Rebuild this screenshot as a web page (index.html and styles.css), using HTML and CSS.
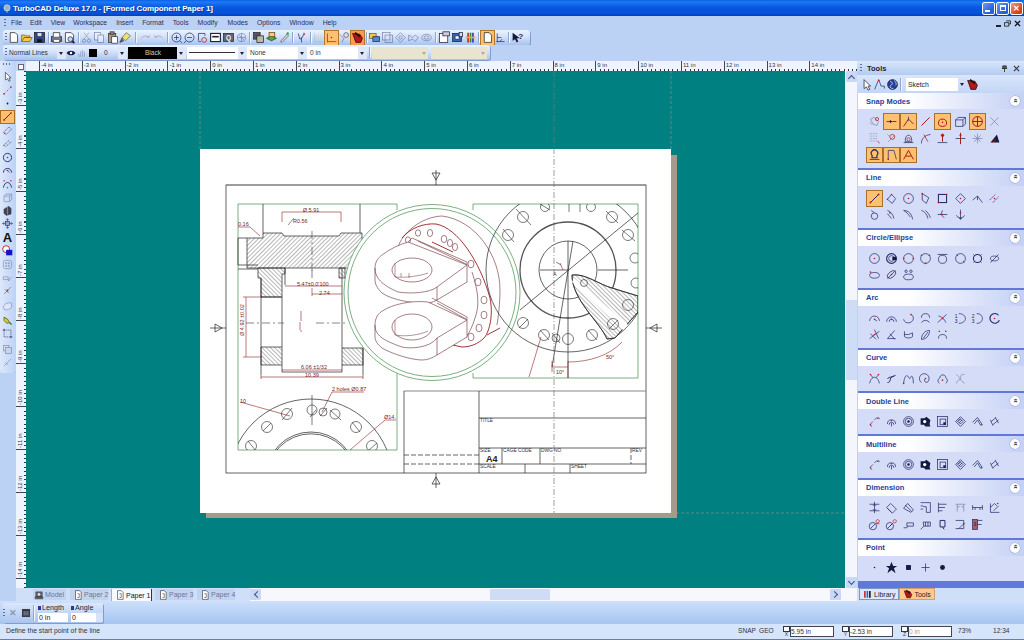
FILE: index.html
```html
<!DOCTYPE html>
<html lang="en">
<head>
<meta charset="utf-8">
<title>TurboCAD Deluxe 17.0</title>
<link rel="stylesheet" href="styles.css">
</head>
<body>
<svg class="defs" width="0" height="0" aria-hidden="true">
  <defs>
    <pattern id="hatchA" width="3" height="3" patternUnits="userSpaceOnUse" patternTransform="rotate(-45)"><line x1="0" y1="0" x2="3" y2="0" stroke="#333" stroke-width=".7"/></pattern>
    <pattern id="hatchB" width="3" height="3" patternUnits="userSpaceOnUse" patternTransform="rotate(45)"><line x1="0" y1="0" x2="3" y2="0" stroke="#333" stroke-width=".7"/></pattern>
    <clipPath id="clipDetail"><circle cx="432" cy="292.5" r="84"/></clipPath>
    <clipPath id="clipRight"><rect x="473" y="204" width="165" height="174"/></clipPath>
    <clipPath id="clipBottom"><rect x="238" y="390" width="159" height="60"/></clipPath>
    <symbol id="d1" viewBox="0 0 16 16"><path d="M3 11l3-3M8 6l3-3M3 13l2 1M13 3l1 2"/><circle class="d" cx="3" cy="12" r="1"/><circle class="d" cx="12" cy="4" r="1"/></symbol>
    <symbol id="d2" viewBox="0 0 16 16"><path d="M3 11a5 5 0 0 1 10 0M5 12a3 3 0 0 1 6 0M8 10v4"/><circle class="d" cx="8" cy="7" r="1"/></symbol>
    <symbol id="d3" viewBox="0 0 16 16"><circle cx="8" cy="8" r="6"/><circle cx="8" cy="8" r="4"/><circle class="f" cx="8" cy="8" r="1.5"/></symbol>
    <symbol id="d4" viewBox="0 0 16 16"><path class="f" d="M2 4h5l2-2 5 4-1 5 1 3-6 0-2-2H2z"/><circle class="w" cx="7" cy="8" r="2"/></symbol>
    <symbol id="d5" viewBox="0 0 16 16"><rect x="2" y="2" width="12" height="12"/><rect x="5" y="5" width="7" height="7"/><rect class="f" x="9" y="9" width="3" height="3"/></symbol>
    <symbol id="d6" viewBox="0 0 16 16"><path d="M8 2l6 6-6 6-6-6zM8 5l3 3-3 3-3-3z"/><path d="M4 8l4-4M6 10l4-4"/></symbol>
    <symbol id="d7" viewBox="0 0 16 16"><path d="M2 9l6-6 6 9M4 11l4-5 4 7"/><circle class="d" cx="13" cy="12" r="1"/></symbol>
    <symbol id="d8" viewBox="0 0 16 16"><path d="M4 8l6-5M6 12l7-6M3 6l3 7M9 3l4 7"/></symbol>
  </defs>
</svg>

<header class="title">
  <svg class="ic app" viewBox="0 0 16 16"><circle cx="8" cy="7" r="5" fill="#9fb0c8" stroke="#e8eef8"/><path d="M8 12v3" stroke="#e8eef8"/></svg>
  <span class="title-text">TurboCAD Deluxe 17.0 - [Formed Component Paper 1]</span>
  <div class="winbtns">
    <span class="winbtn blue"><i class="min"></i></span>
    <span class="winbtn blue"><i class="max"></i></span>
    <span class="winbtn red">✕</span>
  </div>
</header>

<nav class="menubar">
  <span class="grip"></span>
  <span class="m m1">File</span><span class="m m2">Edit</span><span class="m m3">View</span><span class="m m4">Workspace</span><span class="m m5">Insert</span><span class="m m6">Format</span><span class="m m7">Tools</span><span class="m m8">Modify</span><span class="m m9">Modes</span><span class="m m10">Options</span><span class="m m11">Window</span><span class="m m12">Help</span>
  <div class="mdi">
    <span class="mdi-min"></span>
    <svg class="mdi-ic" viewBox="0 0 8 8"><path d="M2.5 1h5v3.5h-2M.5 3h5v4h-5z" fill="none" stroke="#222"/></svg>
    <svg class="mdi-ic" viewBox="0 0 8 8"><path d="M1 1l6 6M7 1L1 7" stroke="#111" stroke-width="1.5"/></svg>
  </div>
</nav>

<div class="tbrow">
  <div class="tb tb1">
    <span class="grip"></span>
    <svg class="ic" viewBox="0 0 16 16"><path d="M4 2h6l3 3v9H4z" fill="#fff" stroke="#222"/></svg>
    <svg class="ic" viewBox="0 0 16 16"><path d="M2 13V5h4l1 1h5v2H5l-3 5h10l3-5H5" fill="#f5c84c" stroke="#7a5a10"/></svg>
    <svg class="ic" viewBox="0 0 16 16"><rect x="2" y="2" width="12" height="12" fill="#3c4a80" stroke="#111"/><rect x="5" y="2" width="6" height="5" fill="#dde"/><rect x="5" y="10" width="6" height="4" fill="#111"/></svg>
    <span class="sep"></span>
    <svg class="ic" viewBox="0 0 16 16"><rect x="2" y="7" width="12" height="6" fill="#778" stroke="#222"/><path d="M4 7V2h8v5M4 11v3h8v-3" fill="#fff" stroke="#222"/></svg>
    <svg class="ic" viewBox="0 0 16 16"><path d="M3 2h7l3 3v9H3z" fill="#fff" stroke="#223"/><circle cx="9" cy="10" r="3" fill="#bde" stroke="#225"/><path d="M11 12l3 3" stroke="#225" stroke-width="2"/></svg>
    <span class="sep"></span>
    <svg class="ic dim" viewBox="0 0 16 16"><path d="M5 2l6 8M11 2L5 10" stroke="#667"/><circle cx="5" cy="12" r="2"/><circle cx="11" cy="12" r="2"/></svg>
    <svg class="ic dim" viewBox="0 0 16 16"><rect x="2" y="2" width="7" height="9" fill="#fff"/><rect x="6" y="5" width="7" height="9" fill="#fff"/></svg>
    <svg class="ic" viewBox="0 0 16 16"><rect x="3" y="3" width="9" height="11" fill="#a98" stroke="#333"/><rect x="7" y="7" width="7" height="8" fill="#fff" stroke="#334"/><rect x="5" y="1" width="5" height="3" fill="#888" stroke="#333"/></svg>
    <svg class="ic" viewBox="0 0 16 16"><path d="M9 2l5 4-6 6-4-4z" fill="#f2e070" stroke="#665"/><path d="M4 8l-3 6 5-2" fill="#668" stroke="#334"/></svg>
    <span class="sep sepw"></span>
    <svg class="ic dim" viewBox="0 0 16 16"><path d="M3 9a5 4 0 0 1 9-1l1-3M12 8l-3-1" stroke="#667"/></svg>
    <svg class="ic dim" viewBox="0 0 16 16"><path d="M13 9a5 4 0 0 0-9-1L3 5M4 8l3-1" stroke="#667"/></svg>
    <span class="sep"></span>
    <svg class="ic" viewBox="0 0 16 16"><circle cx="8" cy="8" r="5.5"/><path d="M5 8h6M8 5v6M12 12l3 3"/></svg>
    <svg class="ic" viewBox="0 0 16 16"><circle cx="8" cy="8" r="5.5"/><path d="M5 8h6M4 12l-3 3"/></svg>
    <svg class="ic" viewBox="0 0 16 16"><path d="M3 3h8v3M3 3v9M3 13h3"/><circle class="r" cx="10" cy="11" r="3"/></svg>
    <svg class="ic" viewBox="0 0 16 16"><rect x="2" y="3" width="12" height="10" fill="#fff" stroke="#223" stroke-width="1.4"/><path d="M4 7h8" stroke="#223" stroke-width="2"/></svg>
    <svg class="ic" viewBox="0 0 16 16"><rect x="2" y="3" width="12" height="10" fill="#667" stroke="#223"/><text class="tbq" x="8" y="11">Q</text></svg>
    <svg class="ic dim" viewBox="0 0 16 16"><circle cx="8" cy="8" r="5"/><path d="M3 8h10M8 3v10M5 5l6 6"/></svg>
    <span class="sep"></span>
    <svg class="ic" viewBox="0 0 16 16"><rect x="2" y="2" width="8" height="8" fill="#556" stroke="#222"/><rect x="6" y="6" width="8" height="8" fill="#bba" stroke="#222"/></svg>
    <svg class="ic" viewBox="0 0 16 16"><path d="M2 9l6-3 6 3-6 3z" fill="#5a4" stroke="#232"/><rect x="5" y="2" width="7" height="5" fill="#fc6" stroke="#642"/></svg>
    <svg class="ic" viewBox="0 0 16 16"><path d="M3 13L11 4l2 2-8 8z" fill="#d9dcec" stroke="#556"/><circle cx="12" cy="3" r="1.5" fill="#2a4" stroke="none"/></svg>
    <span class="sep"></span>
    <svg class="ic" viewBox="0 0 16 16"><path d="M4 3l2 7 3-2 2-5M8 8v6"/><path d="M11 2l1 3" stroke="#b11"/></svg>
    <span class="sep"></span>
    <svg class="ic dim" viewBox="0 0 16 16"><path d="M3 3v10h10" stroke="#9aa"/><path d="M5 5v6M8 5v6M11 5v6" stroke="#c84" stroke-dasharray="1 1"/></svg>
    <span class="hot"><svg class="ic" viewBox="0 0 16 16"><path class="r" d="M3 14V3M3 13h11"/><circle class="d" cx="8" cy="8" r="1"/></svg></span>
    <svg class="ic" viewBox="0 0 16 16"><path d="M2 4l5 5-2 5" stroke="#778"/><circle cx="10" cy="5" r="3" fill="#ddd" stroke="#556"/></svg>
    <span class="hot hotr"><svg class="ic" viewBox="0 0 16 16"><path d="M2 3l9 1 3 5-2 5H6z" fill="#b21a1a" stroke="#300"/><path d="M5 2l6 5" stroke="#111" stroke-width="2"/></svg></span>
    <span class="sep"></span>
    <svg class="ic" viewBox="0 0 16 16"><rect x="2" y="3" width="8" height="6" fill="#f5c84c" stroke="#654"/><rect x="6" y="7" width="8" height="6" fill="#58c" stroke="#223"/></svg>
    <svg class="ic dim" viewBox="0 0 16 16"><rect x="2" y="2" width="9" height="9" fill="#e8ecf8"/><rect x="5" y="5" width="9" height="9"/></svg>
    <svg class="ic dim" viewBox="0 0 16 16"><path d="M8 2l6 6-6 6-6-6z"/><circle cx="8" cy="8" r="2"/></svg>
    <svg class="ic dim" viewBox="0 0 16 16"><path d="M2 5l5 3 3-3 4 3-4 5-3-3-5 2z"/></svg>
    <svg class="ic dim" viewBox="0 0 16 16"><ellipse cx="8" cy="8" rx="6" ry="4"/><ellipse cx="8" cy="8" rx="3" ry="2"/></svg>
    <span class="sep"></span>
    <svg class="ic" viewBox="0 0 16 16"><rect x="2" y="3" width="10" height="11" fill="#fff" stroke="#223"/><rect x="6" y="1" width="8" height="5" fill="#ccd" stroke="#223"/></svg>
    <svg class="ic" viewBox="0 0 16 16"><rect x="2" y="3" width="11" height="10" fill="#36b" stroke="#123"/><rect x="5" y="6" width="5" height="4" fill="#fff"/><rect x="10" y="2" width="4" height="5" fill="#dde" stroke="#123"/></svg>
    <svg class="ic" viewBox="0 0 16 16"><path d="M5 2v12" stroke="#c22" stroke-width="2"/><path d="M8 2v12" stroke="#383" stroke-width="2"/><path d="M11 2v12" stroke="#33b" stroke-width="2"/><path d="M2 8h12" stroke="#fa0" stroke-width="2"/></svg>
    <span class="sep"></span>
    <span class="hot"><svg class="ic" viewBox="0 0 16 16"><path d="M4 2h6l3 3v9H4z" fill="#fff" stroke="#222"/></svg></span>
    <svg class="ic" viewBox="0 0 16 16"><path d="M4 3v10h9M4 8h5M7 13l3-3" stroke="#334"/><circle class="d" cx="4" cy="13" r="1"/></svg>
    <span class="sep"></span>
    <svg class="ic" viewBox="0 0 16 16"><path d="M2 2v10l3-2 2 4 2-1-2-4h4z" class="f"/><text class="tbhelp" x="9" y="10">?</text></svg>
  </div>
</div>

<div class="tbrow tbrow2">
  <div class="tb tb2">
    <span class="grip"></span>
    <span class="fld f-lines">Normal Lines</span><span class="arr"></span>
    <svg class="ic small" viewBox="0 0 16 16"><path class="f" d="M1 8c3-5 11-5 14 0-3 5-11 5-14 0z"/><circle class="w" cx="8" cy="8" r="2"/></svg>
    <svg class="ic small dim" viewBox="0 0 16 16"><path d="M6 14V5M9 14V3M12 14V6M4 14l-2-5"/></svg>
    <span class="swatch"></span>
    <span class="fld f-layer">0</span><span class="arr"></span>
    <span class="fld f-black">Black</span><span class="arr"></span>
    <span class="fld f-line"><i></i></span><span class="arr"></span>
    <span class="fld f-none">None</span><span class="arr"></span>
    <span class="fld f-in">0 in</span><span class="arr"></span>
    <span class="sep sep2"></span>
    <span class="fld f-off"><b></b></span>
    <span class="fld f-off"><b></b></span>
  </div>
</div>

<main class="work">
  <aside class="lefttools">
    <span class="grip-h"></span>
    <span class="lt"><svg class="ic" viewBox="0 0 16 16"><path d="M5 2v11l3-2 2 4 2-1-2-4h3z" fill="#fff" stroke="#223"/></svg></span>
    <span class="lt"><svg class="ic" viewBox="0 0 16 16"><path d="M3 13l2-2M7 9l2-2M11 5l2-2" stroke="#339"/><circle class="d" cx="3" cy="13" r="1.2"/><circle class="d" cx="13" cy="3" r="1.2"/></svg></span>
    <span class="lt"><svg class="ic" viewBox="0 0 16 16"><circle class="f" cx="8" cy="8" r="1.3"/></svg></span>
    <span class="lt act"><svg class="ic" viewBox="0 0 16 16"><path d="M3 13L13 3" stroke="#223" stroke-width="1.3"/><circle class="d" cx="3" cy="13" r="1.3"/><circle class="d" cx="13" cy="3" r="1.3"/></svg></span>
    <span class="lt"><svg class="ic" viewBox="0 0 16 16"><path d="M2 11l8-8 4 3-8 8z" stroke-dasharray="2 1"/><circle class="d" cx="4" cy="12" r="1"/></svg></span>
    <span class="lt"><svg class="ic" viewBox="0 0 16 16"><path d="M2 11L11 3M5 13l9-8" stroke-dasharray="2 1"/><circle class="d" cx="3" cy="11" r="1"/></svg></span>
    <span class="lt"><svg class="ic" viewBox="0 0 16 16"><circle cx="8" cy="8" r="6" stroke-width="1.3"/><circle class="d" cx="8" cy="8" r="1.2"/></svg></span>
    <span class="lt"><svg class="ic" viewBox="0 0 16 16"><path d="M2 11a6 6 0 1 1 12 0" stroke-width="1.3"/><path d="M8 8l3 3"/><circle class="d" cx="8" cy="8" r="1.2"/></svg></span>
    <span class="lt"><svg class="ic" viewBox="0 0 16 16"><path d="M2 14C4 4 12 4 14 14" stroke-width="1.3"/><circle class="d" cx="3" cy="4" r="1"/><circle class="d" cx="13" cy="4" r="1"/><circle class="d" cx="8" cy="14" r="1"/></svg></span>
    <span class="lt"><svg class="ic dim" viewBox="0 0 16 16"><path d="M3 6l3-3h8v8l-3 3H3zM3 6h8v8M11 6l3-3"/></svg></span>
    <span class="lt"><svg class="ic" viewBox="0 0 16 16"><path d="M3 6l7-4 3 3v8l-7 2-3-3z" fill="#445" stroke="#223"/><path d="M8 2v12" stroke="#aab"/></svg></span>
    <span class="lt"><svg class="ic" viewBox="0 0 16 16"><path d="M8 1v14M1 8h14M8 1l-2 2M8 1l2 2M8 15l-2-2M8 15l2-2M1 8l2-2M1 8l2 2M15 8l-2-2M15 8l-2 2"/><rect x="5" y="5" width="6" height="6" fill="#9ab"/></svg></span>
    <span class="lt"><span class="bigA">A</span></span>
    <span class="lt"><svg class="ic" viewBox="0 0 16 16"><circle cx="6" cy="6" r="5" fill="#fff" stroke="#c22" stroke-width="1.4"/><rect x="6" y="7" width="9" height="8" fill="#1212d0" stroke="none"/></svg></span>
    <span class="lt"><svg class="ic dim" viewBox="0 0 16 16"><rect x="2" y="2" width="12" height="12" rx="3"/><circle cx="6" cy="6" r="1"/><circle cx="10" cy="6" r="1"/><circle cx="6" cy="10" r="1"/><circle cx="10" cy="10" r="1"/></svg></span>
    <span class="lt"><svg class="ic dim" viewBox="0 0 16 16"><path d="M2 7h7v4H2zM9 13l5-6"/><circle class="d" cx="10" cy="12" r="1"/></svg></span>
    <span class="lt ltsep"><svg class="ic" viewBox="0 0 16 16"><path d="M3 13L13 3M4 6l6 6" stroke="#667"/><circle class="d" cx="8" cy="8" r="1.3"/></svg></span>
    <span class="lt"><svg class="ic dim" viewBox="0 0 16 16"><path d="M2 8c2-5 8-6 12-5v6c-2 3-7 5-11 3z" fill="#eef"/></svg></span>
    <span class="lt"><svg class="ic" viewBox="0 0 16 16"><path d="M3 3l5 3 3 5-4 1-4-4z" fill="#dc2" stroke="#331"/><path d="M11 11l3 3" stroke="#282" stroke-width="2"/></svg></span>
    <span class="lt ltsep"><svg class="ic" viewBox="0 0 16 16"><rect x="3" y="3" width="10" height="10" stroke-dasharray="2 1"/><path d="M1 3h3M3 1v3M12 13h3M13 12v3"/></svg></span>
    <span class="lt"><svg class="ic dim" viewBox="0 0 16 16"><rect x="2" y="2" width="8" height="8" fill="#dde"/><rect x="5" y="5" width="9" height="9" fill="#ccd"/></svg></span>
    <span class="lt"><svg class="ic dim" viewBox="0 0 16 16"><path d="M3 13L13 3M5 8l4 4"/></svg></span>
  </aside>

  <section class="center">
    <div class="hruler">
      <span class="corner"><i></i></span>
      <div class="hticks">
        <span>-4 in</span><span>-3 in</span><span>-2 in</span><span>-1 in</span><span>0 in</span><span>1 in</span><span>2 in</span><span>3 in</span><span>4 in</span><span>5 in</span><span>6 in</span><span>7 in</span><span>8 in</span><span>9 in</span><span>10 in</span><span>11 in</span><span>12 in</span><span>13 in</span><span>14 in</span>
      </div>
    </div>
    <div class="mid">
      <div class="vruler">
        <span class="first">-3 in</span><span>-4 in</span><span>-5 in</span><span>-6 in</span><span>-7 in</span><span>-8 in</span><span>-9 in</span><span>-10 in</span><span>-11 in</span><span>-12 in</span><span>-13 in</span><span>-14 in</span>
      </div>
      <div class="canvas">
        <svg class="sheet" viewBox="26 71 819 517" width="819" height="517">
          <g class="guides">
            <path d="M200 71V149M671 71V149M671 513H845"/>
          </g>
          <rect x="206" y="155" width="471" height="363" fill="#a59b8b"/>
          <rect x="200" y="149" width="471" height="364" fill="#fff"/>
          <g class="ink">
            <rect x="226" y="185" width="420" height="288"/>
            <path class="thick" d="M226 185H646"/>
            <path d="M436 170v15M432 173h8l-4 7zM436 473v15M432 484h8l-4-7zM210 328h16M215 324v8l7-4zM646 328h16M657 324v8l-7-4z"/>
            <path class="thick" d="M404 391H646"/>
            <path d="M404 391V473M479 391V473M479 418H646M479 448H646M479 464H646M502 448V464M540 448V464M525 464V473M570 464V473"/>
            <path class="dash" d="M404 455H479M404 464H479M631 448V464"/>
          </g>
          <g class="tb-labels">
            <text x="480" y="422">TITLE</text><text x="480" y="452">SIZE</text><text x="503" y="452">CAGE CODE</text><text x="541" y="452">DWG NO</text><text x="632" y="452">REV</text><text x="480" y="468">SCALE</text><text x="571" y="468">SHEET</text>
            <text class="a4" x="486" y="462">A4</text>
          </g>

          <path class="green" d="M397 210V204H238V450H397V373"/>
          <g class="ink">
            <path fill="url(#hatchA)" d="M247 238H263V233H282L284 236H339L341 233H362V268H247Z"/>
            <path fill="url(#hatchB)" d="M258 268H285V274H282V297H261V278H258Z"/>
            <path fill="url(#hatchB)" d="M261 347H282V365H261Z"/>
            <path fill="url(#hatchB)" d="M342 348H363V365H342Z"/>
            <path fill="url(#hatchB)" d="M339 268H345V278H339Z"/>
            <path d="M263 204V233M360 204V233M238 238H247M238 265H258M238 269H258M261 278V375M282 297V347M261 297H282M285 268V285M342 268V348M363 348V375M282 365V372H342V365M238 238V265"/>
            <path class="thin" d="M246 323H284M316 323H345M312 231V272M312 270V281"/>
          </g>
          <g class="dimr">
            <path d="M282 212H341M282 212V222M341 212V222M288 225L294 218M285 286H342M312 294H342M312 288V296M246 297V357M243 297H262M243 357H262M282 370H342M261 377H363M261 375V379M363 375V379M301 332V330M300 322V330M301 311V321"/>
            <path d="M238 227H250L260 236M332 392H364M332 392L322 412M240 402L290 416M385 420H396M385 420L350 450"/>
          </g>
          <g class="dimt">
            <text x="311" y="212" text-anchor="middle">Ø 5.91</text>
            <text x="293" y="223">R0.56</text>
            <text x="238" y="226">0.16</text>
            <text x="297" y="286">5.47±0.0'100</text>
            <text x="319" y="295">2.74</text>
            <text x="301" y="369">6.06 ±1/32</text>
            <text x="305" y="377">10.39</text>
            <text x="332" y="391">2 holes Ø0.87</text>
            <text x="240" y="403">10</text>
            <text x="384" y="419">Ø14.</text>
            <text transform="rotate(-90 244 336)" x="244" y="336">Ø 4.92 ±0.02</text>
          </g>
          <g clip-path="url(#clipBottom)" class="ink">
            <circle cx="311" cy="481" r="82"/>
            <circle cx="311" cy="477" r="45"/>
            <circle cx="311" cy="478" r="44.2"/>
            <g class="holes">
              <circle cx="312" cy="410" r="5"/><circle cx="323" cy="412" r="4"/><circle cx="335" cy="414" r="5"/><circle cx="356" cy="427" r="5.5"/><circle cx="372" cy="446" r="5.5"/><circle cx="287" cy="414" r="5.5"/><circle cx="267" cy="427" r="5.5"/><circle cx="251" cy="446" r="5.5"/>
              <path d="M312 395V425M310 417L316 410M292 408L282 420M320 416L327 408M330 410L341 420M352 422L360 432M263 431L271 423M248 441L256 451M369 450L377 443"/>
            </g>
          </g>

          <circle class="green whitefill" cx="432" cy="292.5" r="88"/>
          <circle class="green" cx="432" cy="292.5" r="84"/>
          <g clip-path="url(#clipDetail)" class="part">
            <path d="M398 247C402 234 420 217 442 216C475 220 500 255 500 290C500 305 498 318 497 325"/>
            <path class="red" d="M402 238C410 228 424 223 436 224C458 228 480 262 490 298C494 318 488 334 484 338C478 344 470 347 462 347L448 344"/>
            <path class="red" d="M432 242L453 252M487 335L500 328"/>
            <path d="M472 272C478 290 480 305 475 318C472 328 468 335 465 338"/>
            <g class="rim">
              <ellipse cx="408" cy="240" rx="2.6" ry="3.2"/><ellipse cx="418" cy="233" rx="2.6" ry="3.2"/><ellipse cx="430" cy="233" rx="2.6" ry="3.6"/><ellipse cx="444" cy="239" rx="2.8" ry="3.6"/><ellipse cx="450" cy="243" rx="2.6" ry="3.6"/><ellipse cx="455" cy="247" rx="2.6" ry="3.6"/><ellipse cx="471" cy="264" rx="3" ry="3.8"/><ellipse cx="478" cy="282" rx="3" ry="3.8"/><ellipse cx="484" cy="300" rx="3" ry="3.8"/><ellipse cx="484" cy="315" rx="3" ry="3.8"/><ellipse cx="479" cy="328" rx="3" ry="3.8"/><ellipse cx="471" cy="337" rx="3" ry="3.8"/>
            </g>
            <path class="wf" d="M408 242L467 265V282L437 300C432 303 428 303 422 303C412 303 392 300 382 293C377 288 375 284 375 280V268C375 262 378 258 382 255C390 249 398 245 408 242Z"/>
            <path d="M412 238L408 242M412 238L467 262V265M418 241L466 264M375 268C375 278 382 285 398 292C410 294 430 293 437 287L467 265M437 287V300"/>
            <ellipse class="wf" cx="412" cy="270" rx="20" ry="12"/>
            <path class="thinp" d="M395 263V277M395 277C405 278 420 276 428 273M401 273V277M409 273V278"/>
            <path class="wf" d="M428 302L467 320V337L437 355C432 358 428 360 422 360C412 360 392 354 382 348C377 344 375 340 375 337V325C375 318 378 313 384 310C392 305 410 300 428 302Z"/>
            <path d="M432 298L467 317V320M437 303L466 319M375 325C375 335 382 340 402 347C410 349 430 348 437 338L467 320M437 338V355"/>
            <ellipse class="wf" cx="412" cy="327" rx="20" ry="13"/>
            <path class="thinp" d="M395 320V335M395 335C405 337 420 335 428 331"/>
          </g>

          <path class="green" d="M473 210V204H638V378H473V373"/>
          <g clip-path="url(#clipRight)" class="ink">
            <circle cx="568" cy="270" r="82"/>
            <circle class="heavy" cx="568" cy="270" r="48"/>
            <circle cx="568" cy="270" r="29"/>
            <path class="whitefill" d="M572 275C585 273 600 285 612 288L638 296V312L615 338L607 339C600 322 572 300 572 275Z"/>
            <path fill="url(#hatchB)" d="M572 275C585 273 600 285 612 288L638 296V312L615 338L607 339C600 322 572 300 572 275Z"/>
            <path class="whitefill noline" d="M574 278L628 325L623 330L572 282Z"/>
            <path d="M520 310L638 213M540 270H568M598 270H628M568 241V270M568 270V378M573 241L552 367"/>
            <g class="holes">
              <circle cx="523" cy="217" r="5.5"/><circle cx="508" cy="235" r="5.5"/><circle cx="545" cy="207" r="4.5"/><circle cx="591" cy="207" r="4.5"/><circle cx="612" cy="217" r="5.5"/><circle cx="628" cy="235" r="5.5"/><circle cx="635" cy="258" r="5"/><circle cx="636" cy="283" r="5"/><circle cx="628" cy="305" r="5.5"/><circle cx="613" cy="324" r="5.5"/><circle cx="592" cy="335" r="5.5"/><circle cx="568" cy="339" r="5.5"/><circle cx="556" cy="338" r="4"/><circle cx="544" cy="335" r="5.5"/><circle cx="523" cy="323" r="5.5"/><circle cx="584" cy="283" r="3.5"/>
              <path d="M516 209L531 225M503 229L514 242M540 204L550 210M569 204V212M580 204V212M606 211L618 223M622 230L635 241M540 330L549 340M552 333L560 343M588 330L597 340M519 328L528 319M609 329L618 320"/>
            </g>
          </g>
          <g class="dimr">
            <path d="M552 367H568M552 361V372M568 361V378M529 377L541 337M568 362C590 362 610 355 622 342M556 262L561 265M563 270L560 263"/>
          </g>
          <g class="dimt">
            <text x="606" y="359">50°</text>
            <text x="556" y="374">10°</text>
            <text x="553" y="276">A</text>
          </g>
          <path class="vguide" d="M554 71V513"/>
        </svg>
      </div>
      <div class="vscroll">
        <span class="sbtn up"></span>
        <span class="vthumb"></span>
        <span class="sbtn dn"></span>
      </div>
    </div>
    <div class="tabsrow">
      <div class="sheets">
        <span class="sh off s-model"><svg class="ic tinyi" viewBox="0 0 16 16"><path d="M3 3h10v8H3zM2 11h12v3H2z" fill="#778" stroke="#222"/><circle cx="8" cy="7" r="3" fill="#dde" stroke="#222"/></svg>Model</span>
        <span class="sh off"><svg class="ic tinyi" viewBox="0 0 16 16"><path d="M4 1h6l3 3v11H4z" fill="#fff" stroke="#222"/><path d="M7 6h3v6H7" stroke="#333"/></svg>Paper 2</span>
        <span class="sh on"><svg class="ic tinyi" viewBox="0 0 16 16"><path d="M4 1h6l3 3v11H4z" fill="#fff" stroke="#222"/><path d="M7 6h3v6H7" stroke="#333"/></svg>Paper 1</span>
        <span class="sh off"><svg class="ic tinyi" viewBox="0 0 16 16"><path d="M4 1h6l3 3v11H4z" fill="#fff" stroke="#222"/><path d="M7 6h3v6H7" stroke="#333"/></svg>Paper 3</span>
        <span class="sh off"><svg class="ic tinyi" viewBox="0 0 16 16"><path d="M4 1h6l3 3v11H4z" fill="#fff" stroke="#222"/><path d="M7 6h3v6H7" stroke="#333"/></svg>Paper 4</span>
      </div>
      <div class="hscroll">
        <span class="sbtn lf"></span>
        <span class="hthumb"></span>
        <span class="sbtn rt"></span>
      </div>
    </div>
  </section>

  <aside class="panelwrap">
    <div class="panelhead">
      <span class="grip"></span><b>Tools</b>
      <svg class="mdi-ic pin" viewBox="0 0 8 8"><path d="M2 1h4v3H2zM1 4h6M4 4v4" fill="#556" stroke="#333"/></svg>
      <svg class="mdi-ic" viewBox="0 0 8 8"><path d="M1 1l6 6M7 1L1 7" stroke="#333" stroke-width="1.3"/></svg>
    </div>
    <div class="paneltools">
      <svg class="ic" viewBox="0 0 16 16"><path d="M5 2v11l3-2 2 4 2-1-2-4h3z" fill="#fff" stroke="#223"/></svg>
      <svg class="ic" viewBox="0 0 16 16"><path d="M2 14L7 2l3 8h4v3" /><circle class="d" cx="7" cy="3" r="1"/></svg>
      <svg class="ic" viewBox="0 0 16 16"><circle cx="8" cy="8" r="6" fill="#2a3f9a" stroke="#112"/><path d="M5 4c4 1 3 4 1 5s-1 4 3 4M10 3c3 2 3 5 2 6" stroke="#cfe"/></svg>
      <span class="sep sepp"></span>
      <span class="combo">Sketch</span><span class="arr"></span>
      <svg class="ic redi" viewBox="0 0 16 16"><path d="M2 3l9 1 3 5-2 5H6z" fill="#b21a1a" stroke="#300"/><path d="M5 2l6 5" stroke="#111" stroke-width="2"/></svg>
    </div>
    <div class="panel">

      <section class="sec">
        <h3>Snap Modes<span class="chev"></span></h3>
        <div class="igrid">
          <span><svg viewBox="0 0 16 16"><path class="g" d="M3 5l5-2 5 5-2 5-5-2zM2 9l3 3"/><circle class="r" cx="11" cy="5" r="2"/></svg></span>
          <span class="on"><svg viewBox="0 0 16 16"><path class="r2" d="M2 8h4M9 8h5"/><path d="M6 6l3 2-3 2z" class="f"/></svg></span>
          <span class="on"><svg viewBox="0 0 16 16"><path class="r2" d="M2 14L8 5l6 6"/><path d="M8 2v5"/></svg></span>
          <span><svg viewBox="0 0 16 16"><path class="r2" d="M3 13L13 3"/></svg></span>
          <span class="on"><svg viewBox="0 0 16 16"><path class="r2" d="M3 10a5 5 0 1 1 10 0c0 3-2 4-5 4s-5-1-5-4z"/><circle class="d" cx="8" cy="9" r="1"/></svg></span>
          <span><svg viewBox="0 0 16 16"><path d="M2 6l3-3h9v8l-3 3H2zM2 6h9v8M11 6l3-3"/></svg></span>
          <span class="on"><svg viewBox="0 0 16 16"><circle class="r2" cx="8" cy="8" r="6"/><path class="r2" d="M2 8h12M8 2v12"/></svg></span>
          <span><svg viewBox="0 0 16 16"><path class="g" d="M3 3l10 10M13 3L3 13"/></svg></span>
          <span><svg viewBox="0 0 16 16"><path class="g dots" d="M2 2h9M2 5h9M2 8h9M2 11h9"/><path class="r" d="M12 11l2 3"/></svg></span>
          <span><svg viewBox="0 0 16 16"><path class="g" d="M4 12l8-8"/><circle class="r" cx="9" cy="6" r="3"/><path class="g" d="M3 3l3 3"/></svg></span>
          <span><svg viewBox="0 0 16 16"><path d="M4 12c0-5 1-8 4-8s4 3 4 8zM2 13h12"/><circle class="r" cx="8" cy="9" r="2"/></svg></span>
          <span><svg viewBox="0 0 16 16"><path d="M3 14C3 8 7 4 14 3"/><path class="r" d="M6 3l5 9"/></svg></span>
          <span><svg viewBox="0 0 16 16"><path class="r2" d="M8 2v10"/><path d="M2 13h12"/><circle class="d" cx="8" cy="4" r="2"/></svg></span>
          <span><svg viewBox="0 0 16 16"><path d="M2 8h12"/><path class="r2" d="M8 1v14"/><circle class="d" cx="8" cy="4" r="1.3"/></svg></span>
          <span><svg viewBox="0 0 16 16"><path class="g" d="M8 2v12M2 8h12M4 4l8 8M12 4l-8 8"/></svg></span>
          <span><svg viewBox="0 0 16 16"><path class="f" d="M3 13L11 3l3 10z"/><path class="r" d="M5 13l5-4"/></svg></span>
          <span class="on"><svg viewBox="0 0 16 16"><path d="M5 9a4 4 0 1 1 6 0v3H5z" stroke-width="1.5"/><path class="r2" d="M2 14h12"/></svg></span>
          <span class="on"><svg viewBox="0 0 16 16"><path d="M4 14V3h7l3 11"/><circle class="d" cx="4" cy="14" r="1"/></svg></span>
          <span class="on"><svg viewBox="0 0 16 16"><path class="r2" d="M2 14L8 3l6 11M5 10h6"/></svg></span>
        </div>
      </section>

      <section class="sec">
        <h3>Line<span class="chev"></span></h3>
        <div class="igrid">
          <span class="on"><svg viewBox="0 0 16 16"><path d="M3 13L13 3" stroke-width="1.2"/><circle class="d" cx="3" cy="13" r="1.2"/><circle class="d" cx="13" cy="3" r="1.2"/></svg></span>
          <span><svg viewBox="0 0 16 16"><path d="M3 9l5-6 5 5-4 6-5-4"/><circle class="d" cx="8" cy="3" r="1"/><circle class="d" cx="3" cy="9" r="1"/></svg></span>
          <span><svg viewBox="0 0 16 16"><circle cx="8" cy="8" r="6"/><circle class="d" cx="8" cy="8" r="1"/></svg></span>
          <span><svg viewBox="0 0 16 16"><path d="M4 2l8 5-3 7-5-4z"/><circle class="d" cx="4" cy="2" r="1"/></svg></span>
          <span><svg viewBox="0 0 16 16"><rect x="3" y="3" width="10" height="10" stroke-width="1.3"/><circle class="d" cx="3" cy="13" r="1"/><circle class="d" cx="13" cy="3" r="1"/></svg></span>
          <span><svg viewBox="0 0 16 16"><path d="M8 2l6 6-6 6-6-6z"/><circle class="d" cx="8" cy="8" r="1"/></svg></span>
          <span><svg viewBox="0 0 16 16"><path d="M2 10l6-5 6 8M8 5v5"/></svg></span>
          <span><svg viewBox="0 0 16 16"><path d="M2 10l7-7M6 13l7-7" stroke-dasharray="3 1"/><circle class="d" cx="8" cy="8" r="1"/></svg></span>
          <span><svg viewBox="0 0 16 16"><circle cx="8" cy="10" r="4"/><path d="M4 3l4 3"/></svg></span>
          <span><svg viewBox="0 0 16 16"><path d="M3 3c4 1 7 5 8 10M3 7l5 6"/><circle class="d" cx="6" cy="6" r="1"/></svg></span>
          <span><svg viewBox="0 0 16 16"><path d="M2 3c6 0 10 4 11 11M2 3c3 2 6 4 8 8"/></svg></span>
          <span><svg viewBox="0 0 16 16"><path d="M3 3c4 1 7 5 8 10M8 3c2 2 5 5 6 9"/></svg></span>
          <span><svg viewBox="0 0 16 16"><path d="M2 8h12M8 3l-2 5 4 4"/><circle class="d" cx="8" cy="8" r="1"/></svg></span>
          <span><svg viewBox="0 0 16 16"><path d="M8 2v12M3 9c1 4 9 4 10 0M8 14l-2-2M8 14l2-2"/><circle class="d" cx="8" cy="6" r="1"/></svg></span>
        </div>
      </section>

      <section class="sec">
        <h3>Circle/Ellipse<span class="chev"></span></h3>
        <div class="igrid">
          <span><svg viewBox="0 0 16 16"><circle cx="8" cy="8" r="6"/><circle class="d" cx="8" cy="8" r="1"/></svg></span>
          <span><svg viewBox="0 0 16 16"><circle cx="8" cy="8" r="6" stroke-width="1.4"/><circle cx="8" cy="8" r="3.5"/><path class="f" d="M9 6h5v4H9z"/></svg></span>
          <span><svg viewBox="0 0 16 16"><circle cx="8" cy="8" r="6"/><circle class="d" cx="2" cy="8" r="1"/><circle class="d" cx="14" cy="8" r="1"/></svg></span>
          <span><svg viewBox="0 0 16 16"><circle cx="8" cy="8" r="6"/><circle class="d" cx="3" cy="4" r="1"/><circle class="d" cx="13" cy="4" r="1"/><circle class="d" cx="8" cy="14" r="1"/></svg></span>
          <span><svg viewBox="0 0 16 16"><circle cx="8" cy="9" r="5"/><path d="M2 3h12"/></svg></span>
          <span><svg viewBox="0 0 16 16"><circle cx="8" cy="8" r="6"/><path d="M3 3l2 2M13 13l-2-2"/></svg></span>
          <span><svg viewBox="0 0 16 16"><circle cx="8" cy="8" r="5" stroke-width="1.3"/><path d="M3 3l2 2M13 3l-2 2M3 13l2-2M13 13l-2-2"/></svg></span>
          <span><svg viewBox="0 0 16 16"><ellipse cx="8" cy="8" rx="5" ry="3"/><path d="M3 13L13 3"/></svg></span>
          <span><svg viewBox="0 0 16 16"><ellipse cx="8" cy="9" rx="6" ry="3.5"/><circle class="d" cx="3" cy="5" r="1"/></svg></span>
          <span><svg viewBox="0 0 16 16"><ellipse cx="8" cy="8" rx="6" ry="3.5" transform="rotate(-40 8 8)"/><circle class="d" cx="8" cy="8" r="1"/><path d="M3 13L13 3"/></svg></span>
          <span><svg viewBox="0 0 16 16"><ellipse cx="8" cy="11" rx="6" ry="3.5"/><circle cx="5" cy="4" r="1.5"/><circle cx="11" cy="4" r="1.5"/></svg></span>
        </div>
      </section>

      <section class="sec">
        <h3>Arc<span class="chev"></span></h3>
        <div class="igrid">
          <span><svg viewBox="0 0 16 16"><path d="M2 11a6 6 0 1 1 12 0"/><path d="M8 9l3 2"/><circle class="d" cx="8" cy="9" r="1"/></svg></span>
          <span><svg viewBox="0 0 16 16"><path d="M2 12a6 6 0 1 1 12 0M5 12a3 3 0 1 1 6 0"/><circle class="d" cx="8" cy="9" r="1"/></svg></span>
          <span><svg viewBox="0 0 16 16"><path d="M2 9c1 6 11 6 12-1 0-2-1-4-3-5"/><circle class="d" cx="11" cy="3" r="1"/></svg></span>
          <span><svg viewBox="0 0 16 16"><path d="M3 13a6 6 0 0 1 10 0"/><path d="M3 7a5 5 0 0 1 10 0"/></svg></span>
          <span><svg viewBox="0 0 16 16"><path d="M2 13L13 3M3 5c3 0 8 4 9 8"/><circle class="d" cx="8" cy="8" r="1"/></svg></span>
          <span><svg viewBox="0 0 16 16"><path d="M6 2c5 0 8 3 8 6s-3 6-8 6"/><text class="num" x="1" y="7">1</text><text class="num" x="1" y="14">3</text></svg></span>
          <span><svg viewBox="0 0 16 16"><path d="M7 2c5 0 7 3 7 6s-2 6-7 6"/><text class="num" x="1" y="7">2</text><text class="num" x="1" y="14">3</text></svg></span>
          <span><svg viewBox="0 0 16 16"><path d="M13 4a6 6 0 1 0 1 6" stroke-width="1.4"/><circle class="d" cx="8" cy="8" r="1"/></svg></span>
          <span><svg viewBox="0 0 16 16"><path d="M2 13L14 4M8 2l5 11M3 7l7 7"/><circle class="d" cx="8" cy="8" r="1"/></svg></span>
          <span><svg viewBox="0 0 16 16"><path d="M3 13L12 3M6 7l6 7M3 13h10"/></svg></span>
          <span><svg viewBox="0 0 16 16"><path d="M3 4v6c0 3 10 3 10 0V6"/><path d="M3 8h5l5-2"/></svg></span>
          <span><svg viewBox="0 0 16 16"><path d="M3 14c0-6 4-11 10-11 0 6-4 11-10 11zM5 13L11 5"/></svg></span>
          <span><svg viewBox="0 0 16 16"><path d="M3 13a5 5 0 0 1 10 0"/><circle class="d" cx="4" cy="4" r="1"/><circle class="d" cx="12" cy="4" r="1"/></svg></span>
        </div>
      </section>

      <section class="sec">
        <h3>Curve<span class="chev"></span></h3>
        <div class="igrid">
          <span><svg viewBox="0 0 16 16"><path d="M2 14C4 4 12 4 14 14M3 3l3 4M13 3l-3 4"/><circle class="d" cx="3" cy="3" r="1"/><circle class="d" cx="13" cy="3" r="1"/></svg></span>
          <span><svg viewBox="0 0 16 16"><path d="M3 13c5 0 2-6 6-7l4-2M3 8c3-2 6-2 8-3" stroke-width="1.2"/></svg></span>
          <span><svg viewBox="0 0 16 16"><path d="M2 14c1-10 4-11 6-8s1 3 3 0 3 3 3 8"/><circle class="d" cx="2" cy="14" r="1"/></svg></span>
          <span><svg viewBox="0 0 16 16"><path d="M3 13a6 6 0 1 1 8-1c-3 2-6-1-3-4"/><circle class="d" cx="8" cy="8" r="1"/></svg></span>
          <span><svg viewBox="0 0 16 16"><path d="M4 14c-3-3-1-6 1-7-1-4 7-5 7 0 2 1 3 5 0 7"/><circle class="d" cx="8" cy="10" r="1"/></svg></span>
          <span><svg viewBox="0 0 16 16"><path class="g" d="M3 14c1-5 5-3 5-7s3-4 5-4M3 3c4 3 5 8 10 11"/></svg></span>
        </div>
      </section>

      <section class="sec">
        <h3>Double Line<span class="chev"></span></h3>
        <div class="igrid">
          <span><svg viewBox="0 0 16 16"><use href="#d1"/></svg></span>
          <span><svg viewBox="0 0 16 16"><use href="#d2"/></svg></span>
          <span><svg viewBox="0 0 16 16"><use href="#d3"/></svg></span>
          <span><svg viewBox="0 0 16 16"><use href="#d4"/></svg></span>
          <span><svg viewBox="0 0 16 16"><use href="#d5"/></svg></span>
          <span><svg viewBox="0 0 16 16"><use href="#d6"/></svg></span>
          <span><svg viewBox="0 0 16 16"><use href="#d7"/></svg></span>
          <span><svg viewBox="0 0 16 16"><use href="#d8"/></svg></span>
        </div>
      </section>

      <section class="sec">
        <h3>Multiline<span class="chev"></span></h3>
        <div class="igrid">
          <span><svg viewBox="0 0 16 16"><use href="#d1"/></svg></span>
          <span><svg viewBox="0 0 16 16"><use href="#d2"/></svg></span>
          <span><svg viewBox="0 0 16 16"><use href="#d3"/></svg></span>
          <span><svg viewBox="0 0 16 16"><use href="#d4"/></svg></span>
          <span><svg viewBox="0 0 16 16"><use href="#d5"/></svg></span>
          <span><svg viewBox="0 0 16 16"><use href="#d6"/></svg></span>
          <span><svg viewBox="0 0 16 16"><use href="#d7"/></svg></span>
          <span><svg viewBox="0 0 16 16"><use href="#d8"/></svg></span>
        </div>
      </section>

      <section class="sec">
        <h3>Dimension<span class="chev"></span></h3>
        <div class="igrid">
          <span><svg viewBox="0 0 16 16"><path d="M2 4h12M2 12h12M8 1v14M8 4l-2 2M8 4l2 2M8 12l-2-2M8 12l2-2"/></svg></span>
          <span><svg viewBox="0 0 16 16"><path d="M2 8l5-5 7 7-5 5zM3 9l5 5"/></svg></span>
          <span><svg viewBox="0 0 16 16"><path d="M2 9l5-6 7 8-3 3zM4 5l8 8"/></svg></span>
          <span><svg viewBox="0 0 16 16"><path d="M2 2h12v12H9V7H5M2 6h3M2 10h3"/></svg></span>
          <span><svg viewBox="0 0 16 16"><path d="M3 2v12M3 4h10M3 8h8M3 12h5"/></svg></span>
          <span><svg viewBox="0 0 16 16"><path d="M2 4h12M4 4v9M12 4v9M4 7h3M9 7h3" class="g"/></svg></span>
          <span><svg viewBox="0 0 16 16"><path d="M2 8h12M2 5v6M14 5v6M5 8v3M11 8v3"/></svg></span>
          <span><svg viewBox="0 0 16 16"><path d="M3 3v11h11M3 8l5-5 3 3M7 12l6-6"/><circle class="d" cx="12" cy="3" r="1"/></svg></span>
          <span><svg viewBox="0 0 16 16"><circle cx="6" cy="10" r="4.5"/><path d="M3 13l6-6"/><path class="r" d="M12 2a2 2 0 1 1-.1 0M10 7h4"/></svg></span>
          <span><svg viewBox="0 0 16 16"><circle cx="6" cy="10" r="4.5"/><path d="M3 13l6-6M6 10l3-3"/><path class="r" d="M12 2a2 2 0 1 1-.1 0"/></svg></span>
          <span><svg viewBox="0 0 16 16"><path d="M2 12h4M6 6h8v4H6zM6 12l1-2"/></svg></span>
          <span><svg viewBox="0 0 16 16"><path d="M2 14l4-4M5 5h9v5H6zM8 5v5M11 5v5"/></svg></span>
          <span><svg viewBox="0 0 16 16"><path d="M5 3h6v8H5zM8 11l2 3" stroke-width="1.2"/></svg></span>
          <span><svg viewBox="0 0 16 16"><path d="M2 3h10v10H2M6 13l7-7"/><circle class="d" cx="12" cy="7" r="1"/></svg></span>
          <span><svg viewBox="0 0 16 16"><rect x="2" y="2" width="6" height="12" fill="#a86060"/><path d="M8 3h6M8 8h5"/><text class="num" x="3" y="10">3</text></svg></span>
        </div>
      </section>

      <section class="sec">
        <h3>Point<span class="chev"></span></h3>
        <div class="igrid">
          <span><svg viewBox="0 0 16 16"><circle class="f" cx="8" cy="8" r="1"/></svg></span>
          <span><svg viewBox="0 0 16 16"><path class="f" d="M8 1l2 5h5l-4 3 2 6-5-4-5 4 2-6-4-3h5z"/></svg></span>
          <span><svg viewBox="0 0 16 16"><rect class="f" x="5" y="5" width="6" height="6"/></svg></span>
          <span><svg viewBox="0 0 16 16"><path d="M8 3v10M3 8h10"/></svg></span>
          <span><svg viewBox="0 0 16 16"><circle class="f" cx="8" cy="8" r="3"/></svg></span>
        </div>
      </section>
    </div>
    <div class="ptabs">
      <span class="pt"><svg class="ic tinyi" viewBox="0 0 16 16"><path d="M3 3v11" stroke="#c22" stroke-width="2.5"/><path d="M7 3v11" stroke="#26c" stroke-width="2.5"/><path d="M11 3v11" stroke="#111" stroke-width="2.5"/></svg>Library</span>
      <span class="pt act"><svg class="ic tinyi" viewBox="0 0 16 16"><path d="M2 3l9 1 3 5-2 5H6z" fill="#b21a1a" stroke="#300"/><path d="M5 2l6 5" stroke="#111" stroke-width="2"/></svg>Tools</span>
    </div>
  </aside>
</main>

<div class="cmdbar">
  <div class="cmd">
    <span class="grip"></span>
    <span class="cmd-x">✕</span>
    <svg class="ic calc" viewBox="0 0 16 16"><rect x="2" y="2" width="12" height="12" fill="#334" stroke="#223"/><path d="M5 5v7M8 5v7M11 5v7" stroke="#dde"/></svg>
    <span class="sep sepc"></span>
    <label class="in"><span class="lbl"><i></i>Length</span><span class="box">0 in</span></label>
    <label class="in"><span class="lbl"><i></i>Angle</span><span class="box box-a">0<em></em></span></label>
  </div>
</div>

<footer class="status">
  <span class="hint">Define the start point of the line</span>
  <span class="st snap">SNAP</span>
  <span class="st geo">GEO</span>
  <span class="coord"><i class="ax">X</i><span class="cb">5.95 in</span></span>
  <span class="coord"><i class="ax">Y</i><span class="cb">-2.53 in</span></span>
  <span class="coord"><i class="ax">Z</i><span class="cb dimt2">0 in</span></span>
  <span class="st pct">73%</span>
  <span class="st clock">12:34</span>
</footer>
</body>
</html>
```
FILE: styles.css
```css
* { box-sizing: border-box; }
html, body { margin: 0; padding: 0; }
body {
  width: 1024px; height: 640px; overflow: hidden;
  font: 7px/1 "Liberation Sans", Arial, sans-serif;
  color: #223;
  background: #bcd2f5;
  display: flex; flex-direction: column;
}
.defs { position: absolute; }

/* generic icon strokes */
.ic, .igrid svg, .defs symbol { fill: none; stroke: #232c68; stroke-width: .9; }
.ic { width: 13px; height: 13px; flex: none; }
.ic.small { width: 10px; height: 10px; }
.ic.dim { opacity: .5; }
.ic.tinyi { width: 10px; height: 10px; margin-right: 1px; }
.d { fill: #b81c1c; stroke: none; }
.f { fill: #151a40; stroke: none; }
.w { fill: #fff; stroke: none; }
.r { stroke: #b81c1c; }
.r2 { stroke: #a81818; stroke-width: 1.2; }
.g { stroke: #8088a8; }
.dots { stroke-dasharray: 1 1; }
.num { font: 6px "Liberation Sans", sans-serif; fill: #223; stroke: none; }
.tbq { font: bold 8px "Liberation Sans", sans-serif; fill: #fff; stroke: none; text-anchor: middle; }
.tbhelp { font: bold 10px "Liberation Sans", sans-serif; fill: #1f2a70; stroke: none; }

/* title */
.title {
  height: 16px; flex: none; display: flex; align-items: center; padding-left: 2px;
  background: linear-gradient(#0c5fe8 0, #1c7bf2 12%, #0a58e0 45%, #0550d8 85%, #0340b8 100%);
  color: #fff;
}
.app { width: 10px; height: 11px; stroke: none; }
.title-text { margin-left: 1px; font: bold 8px "Liberation Sans", sans-serif; letter-spacing: -.11px; white-space: nowrap; text-shadow: 1px 1px 0 #0a3aa0; }
.winbtns { margin-left: auto; display: flex; gap: 1px; padding-right: 1px; }
.winbtn {
  width: 13px; height: 13px; border: 1px solid #fff; border-radius: 2px; display: block;
  color: #fff; font-size: 8px; line-height: 11px; text-align: center;
}
.winbtn.blue { background: linear-gradient(135deg, #6d9df5, #2a5fdc 70%); }
.winbtn.red { background: linear-gradient(135deg, #f0a080, #d8431c 70%); font-weight: bold; }
.min { display: block; width: 5px; height: 2px; background: #fff; margin: 7px 0 0 2px; }
.max { display: block; width: 6px; height: 6px; border: 1px solid #fff; border-top-width: 2px; margin: 2px 0 0 3px; }

/* menu */
.menubar {
  height: 14px; flex: none; display: flex; align-items: center; padding-left: 4px;
  background: #bcd2f5; font-size: 6.8px; color: #2a2f55;
}
.grip { width: 2px; height: 9px; flex: none; background: repeating-linear-gradient(#5a6f9a 0 1px, transparent 1px 3px); }
.m { white-space: nowrap; }
.m1 { margin-left: 5px; } .m2 { margin-left: 8px; } .m3 { margin-left: 9px; } .m4 { margin-left: 8px; }
.m5 { margin-left: 9px; } .m6 { margin-left: 9px; } .m7 { margin-left: 9px; } .m8 { margin-left: 9px; }
.m9 { margin-left: 10px; } .m10 { margin-left: 9px; } .m11 { margin-left: 9px; } .m12 { margin-left: 9px; }
.mdi { margin-left: auto; display: flex; gap: 3px; align-items: center; padding-right: 3px; }
.mdi-min { width: 5px; height: 2px; background: #222; margin-top: 5px; }
.mdi-ic { width: 7px; height: 7px; }

/* toolbars */
.tbrow { height: 15px; flex: none; background: #bcd2f5; padding-left: 3px; display: flex; }
.tbrow2 { height: 16px; }
.tb {
  display: flex; align-items: center; height: 15px; border-radius: 3px;
  background: linear-gradient(#eaf2fe, #d3e2fa 45%, #a8c2ec 100%);
  box-shadow: 1px 1px 0 #7f9bd0; padding-left: 2px;
}
.tb1 { width: 527px; }
.tb2 { width: 487px; }
.sep { width: 1px; height: 11px; background: #8ea6cf; margin: 0 1.6px; flex: none; box-shadow: 1px 0 0 #f2f6fe; }
.sepw { margin: 0 3px; }
.hot { width: 13px; height: 14px; background: #ffc070; outline: 1px solid #b4762a; display: flex; align-items: center; flex: none; }
.hotr { background: #ff9a50; }
.fld { height: 12px; line-height: 12px; background: #fff; font-size: 6.6px; white-space: nowrap; flex: none; padding-left: 1px; color: #333; }
.arr { width: 9px; height: 12px; background: #dde7f8; position: relative; flex: none; }
.arr::after { content: ""; position: absolute; left: 2px; top: 5px; border: 2.5px solid transparent; border-top: 3px solid #223; }
.f-lines { width: 48px; margin-left: 2px; background: transparent; padding-left: 0; }
.tb2 .ic.small { margin: 0 1px 0 0; }
.swatch { width: 8px; height: 8px; background: #000; margin: 0 2px 0 1px; flex: none; }
.f-layer { width: 16px; margin-left: 3px; background: transparent; padding-left: 2px; }
.f-black { width: 49px; background: #000; color: #ccc; text-align: center; margin-left: 1px; }
.f-line { width: 51px; position: relative; margin-left: 1px; }
.f-line i { position: absolute; left: 2px; right: 3px; top: 5px; height: 1px; background: #333; }
.f-none { width: 51px; padding-left: 3px; }
.f-in { width: 51px; padding-left: 3px; }
.sep2 { margin: 0 2px 0 2px; }
.f-off { width: 56px; margin-right: 3px; background: #e8e4cf; position: relative; }
.f-off b { position: absolute; right: 2px; top: 5px; border: 2px solid transparent; border-top: 3px solid #aaa; }

/* workspace */
.work { flex: none; height: 540px; display: flex; }
.lefttools {
  width: 16px; flex: none; display: flex; flex-direction: column;
  background: linear-gradient(90deg, #dce8fb, #bcd2f5);
  padding-top: 2px; height: 312px; border-radius: 0 0 3px 3px;
  box-shadow: 1px 0 0 #9ab4e2;
}
.grip-h { width: 9px; height: 2px; margin: 0 0 5px 3px; background: repeating-linear-gradient(90deg, #5a6f9a 0 1px, transparent 1px 3px); flex: none; }
.lt { height: 13.4px; width: 15px; flex: none; display: flex; align-items: center; justify-content: center; }
.lt.act { background: #ffbe70; outline: 1px solid #a86c28; outline-offset: -1px; }
.lt .ic { width: 11px; height: 11px; }
.ltsep { margin-bottom: 2.5px; }
.bigA { font: bold 13px "Liberation Sans", sans-serif; color: #111; }

.center { width: 841px; flex: none; display: flex; flex-direction: column; }
.hruler { height: 10px; display: flex; background: #eef4fe; flex: none; }
.corner { width: 10px; flex: none; position: relative; background: #c5d8f6; }
.corner i { position: absolute; left: 2px; top: 3px; width: 6px; height: 6px; background: #fff; border: 1px solid #667; }
.hticks {
  flex: 1; display: flex; padding-left: 13px; overflow: hidden;
  background: repeating-linear-gradient(90deg, #334 0 1px, transparent 1px 4.28px) 13px 100% / 100% 2px no-repeat;
}
.hticks span {
  width: 42.8px; flex: none; border-left: 1px solid #445; padding-left: 1px;
  font-size: 6px; line-height: 8px; color: #334; white-space: nowrap;
}

.mid { height: 517px; display: flex; flex: none; }
.vruler {
  width: 10px; flex: none; display: flex; flex-direction: column; overflow: hidden;
  background: repeating-linear-gradient(#334 0 1px, transparent 1px 4.3px) 100% 0 / 2px 100% no-repeat, #eef4fe;
}
.vruler span {
  height: 43px; flex: none; writing-mode: vertical-rl; transform: rotate(180deg);
  border-top: 1px solid #445; padding-top: 1px; width: 9px;
  font-size: 6px; line-height: 8px; color: #334; white-space: nowrap;
}
.vruler span.first { height: 35px; }
.canvas { width: 819px; background: #008080; flex: none; overflow: hidden; }
.sheet { display: block; }
.guides { fill: none; stroke: #5a8a88; stroke-width: 1; stroke-dasharray: 3 2; }
.ink { fill: none; stroke: #222; stroke-width: .7; }
.thick { stroke: #888; stroke-width: 1.2; }
.thin { stroke-dasharray: 8 3 2 3; stroke: #555; }
.dash { stroke-dasharray: 5 2; }
.heavy { stroke-width: 1.3; stroke: #555; }
.green { fill: none; stroke: #5a9a62; stroke-width: .8; }
.whitefill { fill: #fff; }
.noline { stroke: none; }
.dimr { fill: none; stroke: #8c2024; stroke-width: .6; }
.dimt text { font: 5.5px "Liberation Sans", sans-serif; fill: #7c1c20; }
.tb-labels text { font: 4.8px "Liberation Sans", sans-serif; fill: #333; }
.tb-labels .a4 { font: bold 9px "Liberation Sans", sans-serif; fill: #222; }
.part { fill: none; stroke: #6a2a30; stroke-width: .6; }
.part .red { stroke: #9a1c24; stroke-width: .9; }
.wf { fill: #fff; }
.thinp { stroke-width: .5; }
.rim ellipse { fill: #fff; }
.holes { stroke-width: .6; }
.vguide { fill: none; stroke: #777; stroke-width: .7; stroke-dasharray: 6 2 1 2; }

.vscroll {
  width: 12px; flex: none; display: flex; flex-direction: column; align-items: center;
  background: #f3f6fd;
}
.sbtn { width: 11px; height: 11px; flex: none; background: #c8d8f6; border-radius: 1px; position: relative; display: block; }
.sbtn::after { content: ""; position: absolute; left: 3px; top: 3px; width: 4px; height: 4px; border: 1.5px solid #3d4f80; border-width: 1.5px 0 0 1.5px; }
.up::after { transform: rotate(45deg); top: 4.5px; }
.dn::after { transform: rotate(225deg); top: 2px; }
.lf::after { transform: rotate(-45deg); left: 4.5px; }
.rt::after { transform: rotate(135deg); left: 2px; }
.vthumb { width: 11px; height: 80px; background: #cfdcf6; margin: 218px 0 auto; }
.tabsrow { height: 13px; flex: none; display: flex; background: #cfdff8; padding-left: 14px; }
.sheets { display: flex; gap: 4px; width: 220px; flex: none; padding: 1px 0 0 3px; }
.sh { height: 11px; width: 38px; display: flex; align-items: center; padding: 0 0 0 3px; white-space: nowrap; font-size: 7px; flex: none; }
.s-model { width: 33px; padding-left: 1px; }
.sh.off { color: #6c7690; background: #c3d3ef; }
.sh.on { background: #f6f9ff; height: 12px; box-shadow: 0 1px 0 #334, 1px 0 0 #334, -1px 0 0 #aab; color: #112; width: 39px; }
.hscroll { flex: 1; display: flex; align-items: center; background: #f6f8fd; padding-right: 16px; }
.hthumb { width: 60px; height: 11px; background: #cfdcf6; margin: 0 auto 0 229px; }

/* tool panel */
.panelwrap { width: 167px; flex: none; display: flex; flex-direction: column; background: #bcd2f5; }
.panelhead {
  height: 14px; flex: none; display: flex; align-items: center; gap: 3px; padding: 0 4px 0 3px;
  background: linear-gradient(#d8e6fb, #b4cbf2); color: #223;
}
.panelhead b { margin-left: 2px; font: bold 7.5px "Liberation Sans", sans-serif; flex: 1; }
.pin { margin-right: 2px; }
.paneltools { height: 18px; flex: none; display: flex; align-items: center; padding-left: 3px; background: linear-gradient(#d9e6fb, #c3d6f6); }
.sepp { height: 13px; margin: 0 5px 0 1px; }
.combo { width: 52px; height: 13px; background: #fff; padding-left: 2px; line-height: 13px; font-size: 6.8px; }
.paneltools .arr { height: 13px; background: transparent; }
.redi { margin-left: -1px; }
.panel { width: 166px; margin-left: 1px; height: 495px; flex: none; background: #6178d8; display: flex; flex-direction: column; }
.sec { margin-bottom: 2px; flex: none; }
.sec h3 {
  margin: 0; height: 16px; padding: 0 0 0 8px; display: flex; align-items: center; position: relative;
  font: bold 7.5px "Liberation Sans", sans-serif; color: #22429a;
  background: linear-gradient(90deg, #fff 0, #fff 30%, #c4d0f5 100%);
}
.chev { position: absolute; right: 4px; top: 3px; width: 10px; height: 10px; border-radius: 50%; background: #fff; box-shadow: 0 0 0 .5px #9aa8d8; }
.chev::after { content: "»"; position: absolute; left: 2.5px; top: -.5px; font: bold 8px/9px "Liberation Sans", sans-serif; color: #223; transform: rotate(-90deg); }
.igrid {
  background: #d5dcf8; padding: 4px 0 4.5px 7.5px;
  display: grid; grid-template-columns: repeat(8, 17.2px); grid-auto-rows: 16.75px;
}
.igrid span { display: flex; align-items: center; justify-content: center; }
.igrid svg { width: 13px; height: 13px; }
.igrid span.on { background: #ffc070; box-shadow: inset 0 0 0 1px #a8702c; }
.ptabs { height: 13px; flex: none; display: flex; align-items: flex-start; padding: 0 0 0 2px; background: #cfdff8; }
.pt { height: 12px; display: flex; align-items: center; padding: 0 3px; font-size: 7px; background: #dbe7fb; border: 1px solid #7a95c8; }
.pt.act { background: #ffc98c; border-color: #d0a070; }

/* bottom */
.cmdbar { height: 23px; flex: none; padding: 2px 0 0 3px; background: linear-gradient(#cde0fb, #a5c4f0); }
.cmd {
  width: 100px; height: 20px; display: flex; align-items: center; border-radius: 2px;
  background: linear-gradient(#dbe8fc, #a9c4ee); box-shadow: 1px 1px 0 #7f9bd0; font-size: 7px;
}
.cmd-x { color: #8c98b4; font-size: 9px; font-weight: bold; margin-left: 4px; width: 8px; }
.calc { margin-left: 4px; width: 10px; height: 10px; }
.sepc { height: 16px; margin: 0 4px 0 2px; }
.in { display: flex; flex-direction: column; gap: 2px; margin-right: 3px; width: 30px; }
.in:last-child { width: 32px; margin-right: 0; }
.lbl { white-space: nowrap; font-size: 7.2px; color: #223; }
.lbl i { display: inline-block; width: 3px; height: 4px; background: #2038a0; margin-right: 1px; }
.box { height: 9px; line-height: 9px; background: #fff; padding-left: 1px; display: block; }
.box-a { position: relative; }
.box-a em { position: absolute; right: 0; top: 0; bottom: 0; width: 7px; background: #d5e2f8; }
.status {
  height: 16px; flex: none; display: flex; align-items: center; padding: 0 0 1px 6px;
  background: #d5e5fb; border-bottom: 1px solid #4088e8; color: #334; font-size: 6.6px;
}
.hint { width: 730px; flex: none; font-size: 6.8px; }
.st { flex: none; }
.snap { width: 21px; margin-left: 2px; }
.geo { width: 24px; }
.coord { display: flex; align-items: center; flex: none; width: 59px; }
.ax { width: 7px; font-style: normal; font-size: 5px; text-align: center; display: flex; flex-direction: column; align-items: center; line-height: 5px; }
.ax::before { content: ""; width: 5px; height: 4px; border: 1px solid #334; background: #fff; }
.cb { width: 44px; height: 11px; line-height: 9px; background: #fff; border: 1px solid #445; padding-left: 0; }
.dimt2 { color: #99a; }
.pct { margin-left: -2px; width: 35px; }
.clock { width: 30px; }
```
